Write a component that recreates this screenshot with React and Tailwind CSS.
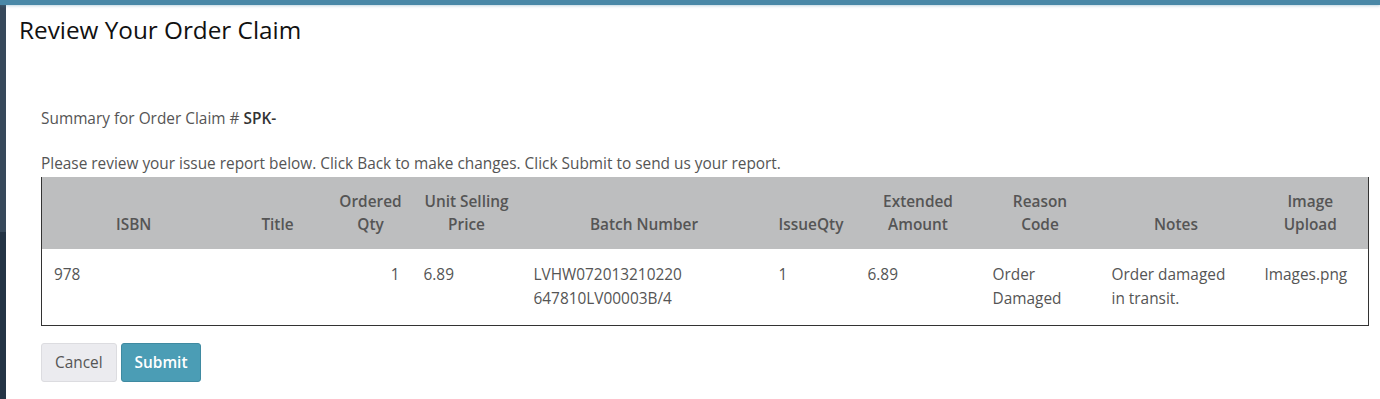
const columns = [
  { key: "isbn", label: ["ISBN"], width: "w-[184px]" },
  { key: "title", label: ["Title"], width: "w-[104px]" },
  { key: "ordered", label: ["Ordered", "Qty"], width: "w-[82px]", right: true },
  { key: "price", label: ["Unit Selling", "Price"], width: "w-[110px]" },
  { key: "batch", label: ["Batch Number"], width: "w-[245px]" },
  { key: "issue", label: ["IssueQty"], width: "w-[89px]" },
  { key: "extended", label: ["Extended", "Amount"], width: "w-[125px]" },
  { key: "reason", label: ["Reason", "Code"], width: "w-[119px]" },
  { key: "notes", label: ["Notes"], width: "w-[153px]" },
  { key: "image", label: ["Image", "Upload"], width: "w-[116px]" },
];

const row = {
  isbn: "978",
  title: "",
  ordered: "1",
  price: "6.89",
  batch: ["LVHW072013210220", "647810LV00003B/4"],
  issue: "1",
  extended: "6.89",
  reason: ["Order", "Damaged"],
  notes: ["Order damaged", "in transit."],
  image: "Images.png",
};

function Lines({ value }) {
  if (Array.isArray(value)) {
    return value.map((line, i) => <div key={i}>{line}</div>);
  }
  return value;
}

export default function App() {
  return (
    <div className="min-h-screen bg-white flex flex-col font-['Open_Sans',sans-serif]">
      <div className="h-[5px] bg-[#4a88a7] shadow-[0_1px_3px_rgba(74,136,167,0.35)] relative z-10" />
      <div className="flex flex-1">
        {/* sidebar edge */}
        <div className="w-[7px] flex flex-col">
          <div className="h-[227px] bg-[#37495b]" />
          <div className="flex-1 bg-[#243445]" />
        </div>

        <main className="flex-1 pl-[13px] pt-[9px]">
          <h1 className="text-[24.3px] leading-[32px] text-[#111]">
            Review Your Order Claim
          </h1>

          <div className="pl-[22px] pr-[11px] pt-[63px] text-[15.4px] text-[#555]">
            <p className="leading-[20px]">
              Summary for Order Claim # <span className="font-semibold text-[#333]">SPK-</span>
            </p>
            <p className="leading-[20px] mt-[25px]">
              Please review your issue report below. Click Back to make changes. Click Submit to send us your report.
            </p>

            <table className="table-fixed w-[1328px] mt-[3px] border-collapse">
              <colgroup>
                {columns.map((c) => (
                  <col key={c.key} className={c.width} />
                ))}
              </colgroup>
              <thead>
                <tr className="bg-[#bdbebf]">
                  {columns.map((c, i) => (
                    <th
                      key={c.key}
                      className={`align-bottom text-center font-semibold text-[#555] leading-[23px] px-2 pt-[13px] pb-[13px] ${
                        i === 0 ? "border-l border-l-[#333]" : ""
                      } ${i === columns.length - 1 ? "border-r border-r-[#333]" : ""}`}
                    >
                      {c.label.map((l, j) => (
                        <div key={j} className="whitespace-nowrap">
                          {l}
                        </div>
                      ))}
                    </th>
                  ))}
                </tr>
              </thead>
              <tbody>
                <tr className="border-b border-[#333]">
                  {columns.map((c, i) => (
                    <td
                      key={c.key}
                      className={`align-top px-3 pt-[14px] pb-[14px] leading-[24px] text-[#555] ${
                        c.right ? "text-right" : "text-left"
                      } ${i === 0 ? "border-l border-l-[#333]" : ""} ${
                        i === columns.length - 1 ? "border-r border-r-[#333]" : ""
                      }`}
                    >
                      <Lines value={row[c.key]} />
                    </td>
                  ))}
                </tr>
              </tbody>
            </table>

            <div className="flex gap-[4px] mt-[17px]">
              <button className="h-[39px] px-[13px] rounded-[3px] bg-[#ebebef] border border-[#dcdce0] text-[#555]">
                Cancel
              </button>
              <button className="h-[39px] px-[13px] rounded-[3px] bg-[#4b9db5] border border-[#3f8aa1] text-white font-semibold">
                Submit
              </button>
            </div>
          </div>
        </main>
      </div>
    </div>
  );
}
